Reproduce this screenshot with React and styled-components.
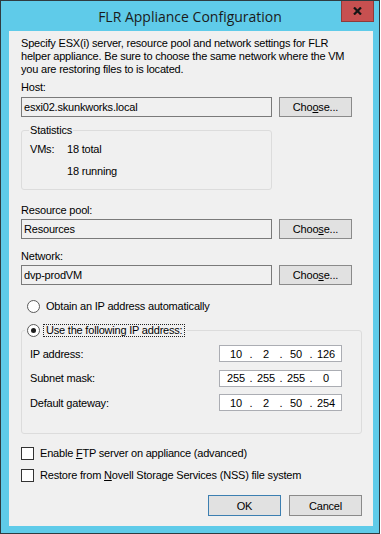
import React from "react"
import styled, { createGlobalStyle } from "styled-components"

const GlobalStyle = createGlobalStyle`
  body {
    margin: 0;
    background: #ffffff;
    font-family: "Liberation Sans", Arial, sans-serif;
    font-size: 11px;
    letter-spacing: -0.2px;
    color: #000;
  }
`

const Window = styled.div`
  width: 380px;
  height: 534px;
  box-sizing: border-box;
  border: 1px solid #2f3b40;
  background: #5fcbe9;
  display: flex;
  flex-direction: column;
`

const TitleBar = styled.div`
  height: 30px;
  display: grid;
  grid-template-columns: 1fr auto 1fr;
  align-items: start;
`

const Title = styled.div`
  grid-column: 2;
  align-self: center;
  font-family: "Open Sans", "Noto Sans", sans-serif;
  font-size: 14px;
  letter-spacing: 0;
  color: #1b1b1b;
  white-space: nowrap;
`

const CloseButton = styled.div`
  grid-column: 3;
  justify-self: end;
  width: 33px;
  height: 21px;
  margin-right: 5px;
  box-sizing: border-box;
  background: #c75050;
  border: 1px solid #8e3b3b;
  border-top: none;
  display: flex;
  align-items: center;
  justify-content: center;
`

const Client = styled.div`
  flex: 1;
  margin: 0 6px 7px 8px;
  background: #f0f0f0;
  padding: 6px 11px 9px 12px;
  display: flex;
  flex-direction: column;
`

const Description = styled.p`
  margin: 0;
  line-height: 13px;
  white-space: nowrap;
`

const Label = styled.div`
  line-height: 13px;
  margin-top: ${p => p.$top || 0}px;
`

const FieldRow = styled.div`
  display: flex;
  gap: 7px;
  margin-top: ${p => p.$top || 0}px;
`

const TextBox = styled.div`
  width: 251px;
  height: 20px;
  box-sizing: border-box;
  border: 1px solid #7a7a7a;
  background: #f0f0f0;
  padding-left: 2px;
  display: flex;
  align-items: center;
`

const Button = styled.div`
  width: 73px;
  height: ${p => p.$height || 20}px;
  box-sizing: border-box;
  border: 1px solid ${p => (p.$primary ? "#3c7fb1" : "#8a8a8a")};
  background: #e1e1e1;
  display: flex;
  align-items: center;
  justify-content: center;
`

const Group = styled.fieldset`
  margin: ${p => p.$top || 0}px 0 0;
  width: ${p => p.$width || "auto"};
  box-sizing: border-box;
  border: 1px solid #dcdcdc;
  border-radius: 3px;
  padding: ${p => p.$pad};
  min-width: 0;
`

const Legend = styled.legend`
  padding: 0 ${p => p.$gap || 1}px;
  margin-left: ${p => p.$shift || 0}px;
  line-height: 13px;
  display: flex;
  align-items: center;
`

const StatRow = styled.div`
  display: grid;
  grid-template-columns: 37px auto;
  line-height: 13px;
  margin-top: ${p => p.$top || 0}px;
`

const OptionRow = styled.label`
  display: flex;
  align-items: center;
  gap: 6px;
  line-height: 13px;
  margin: ${p => p.$top || 0}px 0 0 ${p => p.$left || 0}px;
`

const Radio = styled.span`
  width: 13px;
  height: 13px;
  box-sizing: border-box;
  border: 1px solid #5a5a5a;
  border-radius: 50%;
  background: #fff;
  display: flex;
  align-items: center;
  justify-content: center;

  &::after {
    content: "";
    width: 5px;
    height: 5px;
    border-radius: 50%;
    background: ${p => (p.$checked ? "#1c1c1c" : "transparent")};
  }
`

const FocusLabel = styled.span`
  border: 1px dotted #222;
  padding: 0 2px;
  line-height: 11px;
  margin-left: -3px;
`

const CheckBox = styled.span`
  width: 13px;
  height: 13px;
  box-sizing: border-box;
  border: 1px solid #333;
  background: #fff;
`

const IpRows = styled.div`
  display: flex;
  flex-direction: column;
  gap: 7.5px;
  margin-top: 8px;
`

const IpRow = styled.div`
  display: flex;
  align-items: center;
  justify-content: space-between;
`

const IpBox = styled.div`
  width: 123px;
  height: 17px;
  box-sizing: border-box;
  border: 1px solid #abadb3;
  background: #fff;
  padding-left: 4px;
  display: flex;
  align-items: center;
`

const Octet = styled.span`
  width: 24px;
  text-align: center;
`

const Dot = styled.span`
  width: 6px;
  text-align: center;
`

const Footer = styled.div`
  display: flex;
  justify-content: flex-end;
  gap: 8px;
  margin-top: 13px;
`

const IpField = ({ label, value }) => {
  const parts = value.split(".")
  return (
    <IpRow>
      <span>{label}</span>
      <IpBox>
        {parts.map((p, i) => (
          <React.Fragment key={i}>
            {i > 0 && <Dot>.</Dot>}
            <Octet>{p}</Octet>
          </React.Fragment>
        ))}
      </IpBox>
    </IpRow>
  )
}

const ChooseButton = ({ mnemonic }) => (
  <Button>
    {mnemonic === "o" ? (
      <span>Cho<u>o</u>se...</span>
    ) : (
      <span>Choo<u>s</u>e...</span>
    )}
  </Button>
)

export default function App() {
  return (
    <>
      <GlobalStyle />
      <Window>
        <TitleBar>
          <Title>FLR Appliance Configuration</Title>
          <CloseButton>
            <svg width="9" height="8" viewBox="0 0 9 8">
              <path d="M1 0.5 L8 7.5 M8 0.5 L1 7.5" stroke="#151515" strokeWidth="2.2" />
            </svg>
          </CloseButton>
        </TitleBar>

        <Client>
          <Description>
            Specify ESX(i) server, resource pool and network settings for FLR
            <br />
            helper appliance. Be sure to choose the same network where the VM
            <br />
            you are restoring files to is located.
          </Description>

          <Label $top={5}>Host:</Label>
          <FieldRow $top={3}>
            <TextBox>esxi02.skunkworks.local</TextBox>
            <ChooseButton mnemonic="o" />
          </FieldRow>

          <Group $top={7} $width="251px" $pad="0 8px 11px 8px">
            <Legend $shift={-1}>Statistics</Legend>
            <StatRow $top={6}>
              <span>VMs:</span>
              <span>18 total</span>
            </StatRow>
            <StatRow $top={9}>
              <span />
              <span>18 running</span>
            </StatRow>
          </Group>

          <Label $top={14}>Resource pool:</Label>
          <FieldRow $top={2}>
            <TextBox>Resources</TextBox>
            <ChooseButton mnemonic="s" />
          </FieldRow>

          <Label $top={11}>Network:</Label>
          <FieldRow $top={2}>
            <TextBox>dvp-prodVM</TextBox>
            <ChooseButton mnemonic="s" />
          </FieldRow>

          <OptionRow $top={15} $left={6}>
            <Radio />
            <span>Obtain an IP address automatically</span>
          </OptionRow>

          <Group $top={11} $pad="0 19px 22px 8px">
            <Legend $shift={-5} $gap={2}>
              <OptionRow>
                <Radio $checked />
                <FocusLabel>Use the following IP address:</FocusLabel>
              </OptionRow>
            </Legend>
            <IpRows>
              <IpField label="IP address:" value="10.2.50.126" />
              <IpField label="Subnet mask:" value="255.255.255.0" />
              <IpField label="Default gateway:" value="10.2.50.254" />
            </IpRows>
          </Group>

          <OptionRow $top={13}>
            <CheckBox />
            <span>Enable <u>F</u>TP server on appliance (advanced)</span>
          </OptionRow>
          <OptionRow $top={9}>
            <CheckBox />
            <span>Restore from <u>N</u>ovell Storage Services (NSS) file system</span>
          </OptionRow>

          <Footer>
            <Button $primary $height={21}>OK</Button>
            <Button $height={21}>Cancel</Button>
          </Footer>
        </Client>
      </Window>
    </>
  )
}
